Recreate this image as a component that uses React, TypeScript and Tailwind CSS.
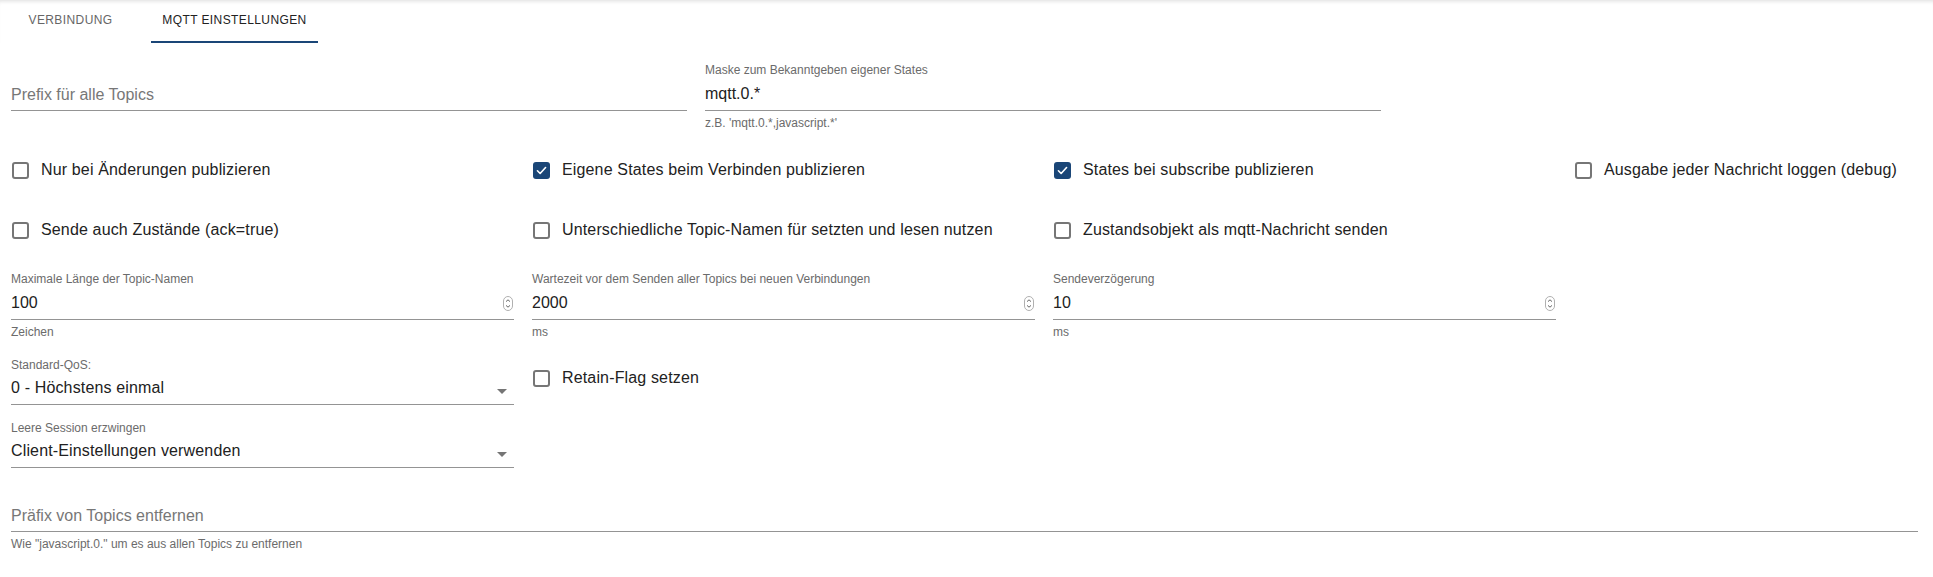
import React from "react";

function Check({ checked }: { checked?: boolean }) {
  return checked ? (
    <div className="flex h-[17px] w-[17px] shrink-0 items-center justify-center rounded-[3px] bg-[#1a4677]">
      <svg width="13" height="13" viewBox="0 0 24 24">
        <path d="M4.5 12.5l5 5 10-11" fill="none" stroke="white" strokeWidth="3" strokeLinecap="round" strokeLinejoin="round" />
      </svg>
    </div>
  ) : (
    <div className="h-[17px] w-[17px] shrink-0 rounded-[3px] border-2 border-[#767676]" />
  );
}

function CheckItem({ label, checked }: { label: string; checked?: boolean }) {
  return (
    <div className="flex h-[42px] w-[521px] shrink-0 items-center">
      <div className="ml-[1px]">
        <Check checked={checked} />
      </div>
      <span className="ml-[12px] whitespace-nowrap text-[16px] tracking-[0.15px] text-[#222222]">{label}</span>
    </div>
  );
}

function Spinner() {
  return (
    <svg width="10" height="15" viewBox="0 0 10 15" className="mr-[1px] shrink-0">
      <rect x="0.5" y="0.5" width="9" height="14" rx="4.5" fill="white" stroke="#b0b0b0" />
      <path d="M3 5.6L5 3.8 7 5.6" fill="none" stroke="#555" strokeWidth="0.9" />
      <path d="M3 9.4L5 11.2 7 9.4" fill="none" stroke="#555" strokeWidth="0.9" />
    </svg>
  );
}

function Arrow() {
  return (
    <svg width="24" height="24" viewBox="0 0 24 24" className="mt-[4px] shrink-0">
      <path d="M7 10l5 5 5-5z" fill="#757575" />
    </svg>
  );
}

function Field({
  label,
  value,
  placeholder,
  helper,
  className,
  end,
  select,
}: {
  label?: string;
  value?: string;
  placeholder?: string;
  helper?: string;
  className?: string;
  end?: React.ReactNode;
  select?: boolean;
}) {
  return (
    <div className={className}>
      <div className="h-[16px] text-[12px] leading-[16px] text-[#6b6b6b]">{label}</div>
      <div className={select ? "flex h-[32px] items-center border-b border-[#949494]" : "flex h-[33px] items-center border-b border-[#949494]"}>
        {value !== undefined ? (
          <span className={select ? "flex-1 pb-[2px] text-[16px] tracking-[0.15px] text-[#212121]" : "flex-1 text-[16px] text-[#212121]"}>{value}</span>
        ) : (
          <span className="flex-1 pt-[1px] text-[16px] text-[#777777]">{placeholder}</span>
        )}
        {end}
      </div>
      {helper && <div className="mt-[4px] text-[12px] leading-[16px] text-[#6b6b6b]">{helper}</div>}
    </div>
  );
}

export default function App() {
  return (
    <div className="h-[577px] w-[1933px] overflow-hidden bg-white font-['Liberation_Sans',Arial,sans-serif]">
      <div className="flex h-[43px] shadow-[inset_0_4px_4px_-3px_rgba(0,0,0,0.14)]">
        <div className="flex h-[43px] w-[141px] items-center justify-center border-b-2 border-transparent pb-[2px] text-[12px] uppercase tracking-[0.4px] text-[#666666]">
          Verbindung
        </div>
        <div className="ml-[10px] flex h-[43px] w-[167px] items-center justify-center border-b-2 border-[#1a4677] pb-[2px] text-[12px] uppercase tracking-[0.4px] text-[#222222]">
          MQTT Einstellungen
        </div>
      </div>

      <div className="pl-[11px]">
        <div className="mt-[19px] flex items-start">
          <Field className="w-[676px]" placeholder="Prefix für alle Topics" />
          <Field
            className="ml-[18px] w-[676px]"
            label="Maske zum Bekanntgeben eigener States"
            value="mqtt.0.*"
            helper="z.B. 'mqtt.0.*,javascript.*'"
          />
        </div>

        <div className="mt-[18px] flex">
          <CheckItem label="Nur bei Änderungen publizieren" />
          <CheckItem label="Eigene States beim Verbinden publizieren" checked />
          <CheckItem label="States bei subscribe publizieren" checked />
          <CheckItem label="Ausgabe jeder Nachricht loggen (debug)" />
        </div>

        <div className="mt-[18px] flex">
          <CheckItem label="Sende auch Zustände (ack=true)" />
          <CheckItem label="Unterschiedliche Topic-Namen für setzten und lesen nutzen" />
          <CheckItem label="Zustandsobjekt als mqtt-Nachricht senden" />
        </div>

        <div className="mt-[20px] flex items-start">
          <Field className="w-[503px] shrink-0" label="Maximale Länge der Topic-Namen" value="100" helper="Zeichen" end={<Spinner />} />
          <Field
            className="ml-[18px] w-[503px] shrink-0"
            label="Wartezeit vor dem Senden aller Topics bei neuen Verbindungen"
            value="2000"
            helper="ms"
            end={<Spinner />}
          />
          <Field className="ml-[18px] w-[503px] shrink-0" label="Sendeverzögerung" value="10" helper="ms" end={<Spinner />} />
        </div>

        <div className="mt-[17px] flex items-start">
          <Field className="w-[503px] shrink-0" label="Standard-QoS:" value="0 - Höchstens einmal" end={<Arrow />} select />
          <div className="ml-[18px]">
            <CheckItem label="Retain-Flag setzen" />
          </div>
        </div>

        <div className="mt-[15px] flex">
          <Field className="w-[503px] shrink-0" label="Leere Session erzwingen" value="Client-Einstellungen verwenden" end={<Arrow />} select />
        </div>

        <div className="mt-[15px]">
          <Field
            className="w-[1907px]"
            placeholder="Präfix von Topics entfernen"
            helper={'Wie "javascript.0." um es aus allen Topics zu entfernen'}
          />
        </div>
      </div>
    </div>
  );
}
